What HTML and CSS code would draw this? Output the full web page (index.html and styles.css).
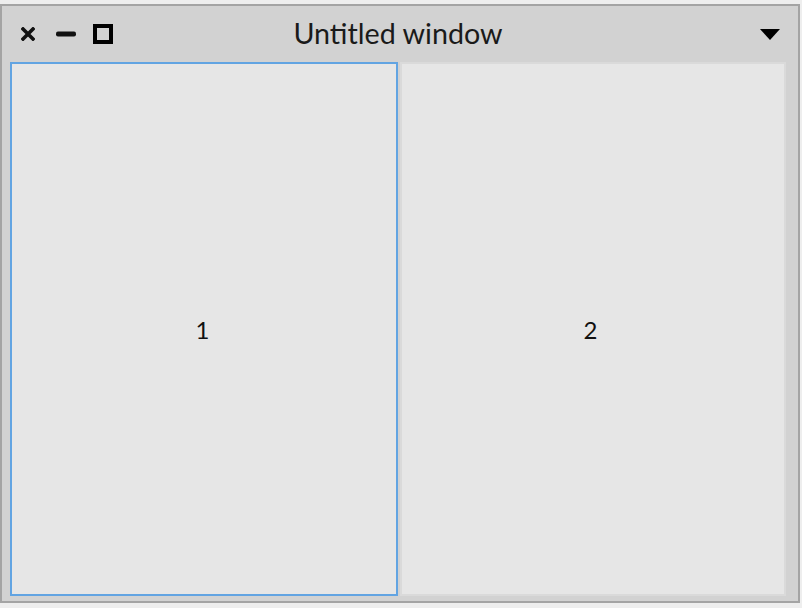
FILE: index.html
```html
<!DOCTYPE html>
<html lang="en">
<head>
<meta charset="utf-8">
<title>Untitled window</title>
<link rel="stylesheet" href="styles.css">
</head>
<body>
<div class="window">
  <div class="titlebar">
    <div class="controls">
      <svg class="icon icon-close" width="14" height="14" viewBox="0 0 14 14"><path d="M2 2 L12 12 M12 2 L2 12" stroke="#111" stroke-width="3.6" stroke-linecap="square"/></svg>
      <svg class="icon icon-min" width="20" height="6" viewBox="0 0 20 6"><rect x="0" y="0.5" width="20" height="5" rx="2" fill="#111"/></svg>
      <svg class="icon icon-max" width="20" height="20" viewBox="0 0 20 20"><rect x="2" y="2" width="16" height="16" fill="none" stroke="#000" stroke-width="4"/></svg>
    </div>
    <div class="title">Untitled window</div>
    <div class="menu">
      <svg class="icon icon-menu" width="20" height="11" viewBox="0 0 20 11"><path d="M0 0 H20 L10 11 Z" fill="#000"/></svg>
    </div>
  </div>
  <div class="panes">
    <div class="pane pane-focused">1</div>
    <div class="pane pane-plain">2</div>
  </div>
</div>
</body>
</html>
```
FILE: styles.css
```css
html, body {
  margin: 0;
  padding: 0;
}
body {
  background: #eeeeee;
  width: 802px;
  height: 608px;
  overflow: hidden;
  font-family: "Lato", "Open Sans", sans-serif;
  color: #1c1c1c;
}
.window {
  box-sizing: border-box;
  width: 800px;
  height: 599px;
  margin-top: 4px;
  border: 2px solid #a4a4a4;
  background: #d2d2d2;
  display: flex;
  flex-direction: column;
}
.titlebar {
  height: 56px;
  flex: none;
  display: grid;
  grid-template-columns: 1fr auto 1fr;
  align-items: center;
}
.controls {
  display: flex;
  align-items: center;
  padding-left: 19px;
}
.icon {
  display: block;
}
.icon-min {
  margin-left: 21px;
}
.icon-max {
  margin-left: 17px;
}
.title {
  font-size: 28.7px;
  line-height: 1;
  color: #1a1a1a;
  margin-top: -2px;
  margin-right: 4px;
}
.menu {
  display: flex;
  justify-content: flex-end;
  padding-right: 18px;
}
.panes {
  flex: 1;
  display: flex;
  gap: 2px;
  padding: 0 12px 5px 8px;
}
.pane {
  box-sizing: border-box;
  background: #e6e6e6;
  display: flex;
  align-items: center;
  justify-content: center;
  font-size: 24px;
  color: #111;
  padding-right: 3px;
}
.pane-focused {
  width: 388px;
  border: 2px solid #62a4e2;
}
.pane-plain {
  flex: 1;
  border: 2px solid #dadada;
  padding-right: 5px;
}
```
